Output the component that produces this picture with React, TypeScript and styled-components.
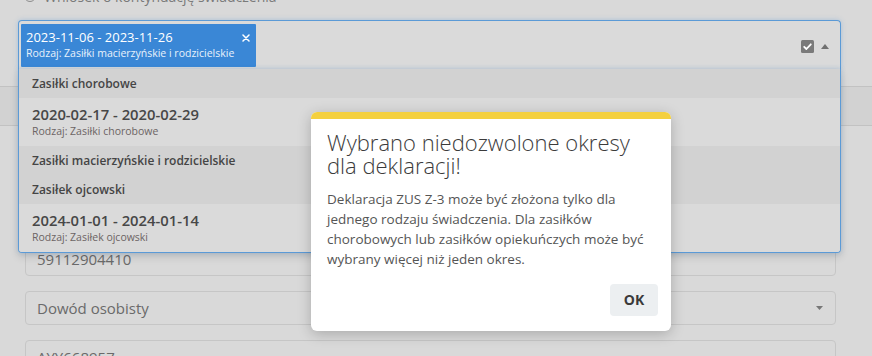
import React from "react";
import styled, { createGlobalStyle } from "styled-components";

const Global = createGlobalStyle`
  html, body { margin: 0; padding: 0; background: #d9d9d9; }
  body { font-family: "Open Sans", "DejaVu Sans", sans-serif; }
  * { box-sizing: border-box; }
`;

const Page = styled.div`
  position: relative;
  width: 872px;
  height: 356px;
  overflow: hidden;
  background: #d9d9d9;
`;

const Content = styled.div`
  display: flex;
  flex-direction: column;
`;

const RadioRow = styled.label`
  display: flex;
  align-items: center;
  gap: 8px;
  height: 20px;
  margin-top: -14px;
  padding-left: 24px;
  color: #7a7a7a;
  font-size: 14px;
`;

const RadioCircle = styled.span`
  width: 12px;
  height: 12px;
  border: 1px solid #8c8c8c;
  border-radius: 50%;
`;

const SelectBox = styled.div`
  position: relative;
  z-index: 2;
  margin: 14px 31px 0 18px;
  height: 49px;
  display: flex;
  align-items: stretch;
  justify-content: space-between;
  padding: 3px 11px 2px 2px;
  border: 1px solid #5b9ad6;
  border-bottom: none;
  border-radius: 4px 4px 0 0;
  background: #dadada;
  box-shadow: 0 0 5px rgba(80, 145, 215, 0.35);
`;

const Chip = styled.div`
  display: flex;
  align-items: flex-start;
  gap: 8px;
  padding: 4px 6px 5px 5px;
  background: #3a87d6;
  color: #ffffff;
  border-radius: 1px;
`;

const ChipTexts = styled.div`
  display: flex;
  flex-direction: column;
`;

const ChipTitle = styled.span`
  font-size: 13px;
  line-height: 18px;
  font-weight: 400;
`;

const ChipSub = styled.span`
  font-size: 10.5px;
  line-height: 15px;
  color: #e8f1fb;
`;

const ChipRemove = styled.svg`
  margin-top: 6px;
  flex: none;
`;

const Indicators = styled.div`
  display: flex;
  align-items: center;
  gap: 7px;
  padding-top: 1px;
`;

const Menu = styled.div`
  position: absolute;
  top: 100%;
  left: -1px;
  right: -1px;
  display: flex;
  flex-direction: column;
  border: 1px solid #5b9ad6;
  border-top: none;
  border-radius: 0 0 4px 4px;
  overflow: hidden;
  background: #dadada;
  box-shadow: 0 4px 8px rgba(0, 0, 0, 0.12), 0 0 5px rgba(80, 145, 215, 0.3);
`;

const GroupHeader = styled.div`
  height: 29px;
  display: flex;
  align-items: center;
  padding: 0 13px;
  background: #d2d2d2;
  color: #454545;
  font-size: 12px;
  font-weight: 600;
`;

const Option = styled.div`
  display: flex;
  flex-direction: column;
  padding: 6px 13px 7px;
  background: #dadada;
`;

const OptionTitle = styled.span`
  font-size: 14.8px;
  line-height: 20px;
  font-weight: 600;
  color: #474747;
`;

const OptionSub = styled.span`
  font-size: 10.5px;
  line-height: 15px;
  color: #6c6464;
`;

const Band = styled.div`
  margin-top: 17px;
  height: 40px;
  border-top: 1px solid #c2c2c2;
  border-bottom: 1px solid #c2c2c2;
  background: #d2d2d2;
`;

const Fields = styled.div`
  display: flex;
  flex-direction: column;
  gap: 15px;
  margin: 116px 36px 0 25px;
`;

const Field = styled.div`
  height: 34px;
  display: flex;
  align-items: center;
  justify-content: space-between;
  padding: 0 12px 0 11px;
  border: 1px solid #c6c6c6;
  border-radius: 4px;
  color: #6a6a6a;
  font-size: 15px;
`;

const Modal = styled.div`
  position: absolute;
  z-index: 5;
  left: 311px;
  top: 112px;
  width: 360px;
  display: flex;
  flex-direction: column;
  background: #ffffff;
  border-radius: 6px;
  overflow: hidden;
  box-shadow: 0 3px 14px rgba(0, 0, 0, 0.22);
`;

const Stripe = styled.div`
  height: 7px;
  background: #f4d03f;
`;

const ModalBody = styled.div`
  display: flex;
  flex-direction: column;
  padding: 12px 13px 15px 16px;
`;

const Title = styled.h2`
  margin: 0;
  font-size: 22px;
  line-height: 22.6px;
  font-weight: 300;
  color: #3b3b3b;
`;

const Text = styled.p`
  margin: 12.5px 0 0;
  font-size: 13.5px;
  line-height: 20.25px;
  color: #555555;
`;

const Actions = styled.div`
  display: flex;
  justify-content: flex-end;
  margin-top: 14px;
`;

const OkButton = styled.button`
  width: 48px;
  height: 32px;
  border: none;
  border-radius: 4px;
  background: #eceff1;
  color: #3a3a3a;
  font-family: inherit;
  font-size: 14px;
  font-weight: 700;
  cursor: pointer;
`;

export default function App() {
  return (
    <Page>
      <Global />
      <Content>
        <RadioRow>
          <RadioCircle />
          Wniosek o kontynuację świadczenia
        </RadioRow>
        <SelectBox>
          <Chip>
            <ChipTexts>
              <ChipTitle>2023-11-06 - 2023-11-26</ChipTitle>
              <ChipSub>Rodzaj: Zasiłki macierzyńskie i rodzicielskie</ChipSub>
            </ChipTexts>
            <ChipRemove width="8" height="8" viewBox="0 0 8 8">
              <path d="M1 1 L7 7 M7 1 L1 7" stroke="#ffffff" strokeWidth="1.5" strokeLinecap="round" />
            </ChipRemove>
          </Chip>
          <Indicators>
            <svg width="13" height="13" viewBox="0 0 13 13">
              <rect x="0" y="0" width="13" height="13" rx="1.5" fill="#7a7a7a" />
              <path d="M3.2 6.8 L5.4 9 L9.8 4.3" stroke="#ffffff" strokeWidth="1.8" fill="none" strokeLinecap="round" strokeLinejoin="round" />
            </svg>
            <svg width="8" height="5" viewBox="0 0 8 5">
              <path d="M0 5 L4 0 L8 5 Z" fill="#707070" />
            </svg>
          </Indicators>
          <Menu>
            <GroupHeader>Zasiłki chorobowe</GroupHeader>
            <Option>
              <OptionTitle>2020-02-17 - 2020-02-29</OptionTitle>
              <OptionSub>Rodzaj: Zasiłki chorobowe</OptionSub>
            </Option>
            <GroupHeader>Zasiłki macierzyńskie i rodzicielskie</GroupHeader>
            <GroupHeader>Zasiłek ojcowski</GroupHeader>
            <Option>
              <OptionTitle>2024-01-01 - 2024-01-14</OptionTitle>
              <OptionSub>Rodzaj: Zasiłek ojcowski</OptionSub>
            </Option>
          </Menu>
        </SelectBox>
        <Band />
        <Fields>
          <Field>59112904410</Field>
          <Field>
            Dowód osobisty
            <svg width="7" height="4" viewBox="0 0 7 4">
              <path d="M0 0 L7 0 L3.5 4 Z" fill="#777777" />
            </svg>
          </Field>
          <Field>AYY668957</Field>
        </Fields>
      </Content>
      <Modal>
        <Stripe />
        <ModalBody>
          <Title>Wybrano niedozwolone okresy dla deklaracji!</Title>
          <Text>
            Deklaracja ZUS Z-3 może być złożona tylko dla jednego rodzaju świadczenia. Dla zasiłków
            chorobowych lub zasiłków opiekuńczych może być wybrany więcej niż jeden okres.
          </Text>
          <Actions>
            <OkButton>OK</OkButton>
          </Actions>
        </ModalBody>
      </Modal>
    </Page>
  );
}
